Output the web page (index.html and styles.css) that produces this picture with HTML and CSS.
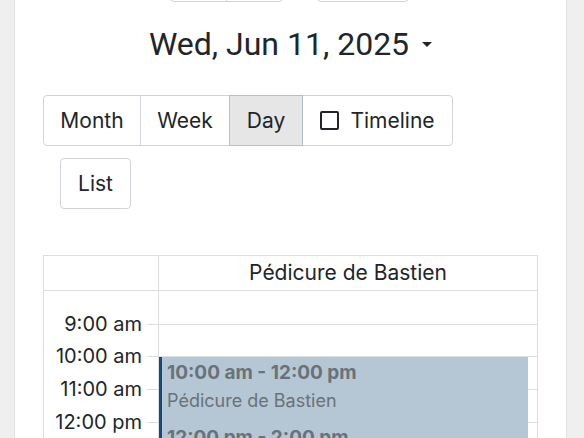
FILE: index.html
```html
<!DOCTYPE html>
<html>
<head>
<meta charset="utf-8">
<link rel="stylesheet" href="styles.css">
</head>
<body>
<div class="panel">
  <div class="nav-row">
    <div class="btn-group">
      <button class="btn nav-btn">&nbsp;</button>
      <button class="btn nav-btn">&nbsp;</button>
    </div>
    <button class="btn today-btn">&nbsp;</button>
  </div>
  <div class="title-row">
    <h2 class="title">Wed, Jun 11, 2025</h2>
    <span class="caret"></span>
  </div>
  <div class="views">
    <div class="btn-group">
      <button class="btn v-month">Month</button>
      <button class="btn v-week">Week</button>
      <button class="btn v-day active">Day</button>
      <button class="btn v-timeline"><span class="checkbox"></span>Timeline</button>
    </div>
    <button class="btn v-list">List</button>
  </div>
  <div class="grid">
    <div class="head-row">
      <div class="axis-head"></div>
      <div class="res-head">Pédicure de Bastien</div>
    </div>
    <div class="body">
      <div class="axis">
        <div class="slot-label"><span></span></div>
        <div class="slot-label"><span>9:00 am</span></div>
        <div class="slot-label"><span>10:00 am</span></div>
        <div class="slot-label"><span>11:00 am</span></div>
        <div class="slot-label"><span>12:00 pm</span></div>
      </div>
      <div class="col">
        <div class="slot"></div>
        <div class="slot"></div>
        <div class="slot"></div>
        <div class="slot"></div>
        <div class="slot"></div>
        <div class="events">
          <div class="event ev1">
            <div class="ev-time">10:00 am - 12:00 pm</div>
            <div class="ev-title">Pédicure de Bastien</div>
          </div>
          <div class="event ev2">
            <div class="ev-time">12:00 pm - 2:00 pm</div>
            <div class="ev-title">Pédicure de Bastien</div>
          </div>
        </div>
      </div>
    </div>
  </div>
</div>
</body>
</html>
```
FILE: styles.css
```css
html, body {
  margin: 0;
  height: 100%;
  overflow: hidden;
}
body {
  background: #efefef;
  font-family: Inter, "Noto Sans", sans-serif;
  color: #212529;
}
.panel {
  display: flow-root;
  margin-left: 14px;
  width: 553px;
  height: 100%;
  background: #fff;
  border-left: 1px solid #e2e2e2;
  border-right: 1px solid #e2e2e2;
  padding: 0 28px;
  box-sizing: border-box;
  overflow: hidden;
}
.btn {
  font-family: inherit;
  font-size: 21px;
  color: #212529;
  background: #fff;
  border: 1px solid #d0d4da;
  border-radius: 4px;
  height: 51px;
  padding: 0 17px;
  margin: 0;
  display: inline-flex;
  align-items: center;
}
.btn-group {
  display: inline-flex;
}
.btn-group .btn {
  border-radius: 0;
  margin-left: -1px;
}
.btn-group .btn:first-child {
  border-radius: 4px 0 0 4px;
  margin-left: 0;
}
.btn-group .btn:last-child {
  border-radius: 0 4px 4px 0;
}
.nav-row {
  display: flex;
  margin-top: -49px;
  padding-left: 127px;
  gap: 34px;
}
.nav-btn {
  width: 57px;
}
.today-btn {
  width: 92px;
}
.title-row {
  display: flex;
  justify-content: center;
  align-items: center;
  margin-top: 22px;
}
.title {
  margin: 0;
  font-family: Roboto, Inter, sans-serif;
  font-weight: 400;
  font-size: 32px;
  line-height: 40px;
}
.caret {
  margin-left: 13px;
  width: 0;
  height: 0;
  border-left: 5px solid transparent;
  border-right: 5px solid transparent;
  border-top: 5px solid #212529;
}
.views {
  margin-top: 31px;
}
.v-month { width: 98px; justify-content: center; padding: 0; }
.v-week { width: 90px; justify-content: center; padding: 0; }
.v-day { width: 74px; justify-content: center; padding: 0; }
.v-timeline { width: 151px; justify-content: center; padding: 0; }
.btn.active {
  background: #e6e6e6;
  border-color: #b8bec6;
  position: relative;
}
.checkbox {
  width: 15px;
  height: 15px;
  border: 2px solid #212529;
  border-radius: 2px;
  margin-right: 11px;
}
.v-list {
  display: flex;
  margin-top: 12px;
  margin-left: 17px;
  width: 71px;
  justify-content: center;
  padding: 0;
}
.grid {
  margin-top: 46px;
  width: 495px;
  box-sizing: border-box;
  border: 1px solid #dedede;
  border-bottom: none;
}
.head-row {
  display: flex;
  height: 34px;
  border-bottom: 1px solid #dedede;
}
.axis-head {
  width: 114px;
  border-right: 1px solid #dedede;
}
.res-head {
  flex: 1;
  text-align: center;
  font-size: 21px;
  line-height: 34px;
}
.body {
  display: flex;
}
.axis {
  width: 114px;
  border-right: 1px solid #dedede;
}
.slot-label {
  height: 32.7px;
  position: relative;
}
.slot-label span {
  position: absolute;
  right: 16px;
  top: -12px;
  font-size: 20px;
  line-height: 24px;
  white-space: nowrap;
}
.slot-label:not(:first-child)::after {
  content: "";
  position: absolute;
  right: 0;
  top: 0;
  width: 11px;
  border-top: 1px solid #dedede;
}
.col {
  flex: 1;
  position: relative;
}
.slot {
  height: 32.7px;
  box-sizing: border-box;
}
.slot + .slot {
  border-top: 1px solid #dedede;
}
.events {
  position: absolute;
  left: 0;
  right: 9px;
  top: 66px;
}
.event {
  background: #b5c7d5;
  border-left: 3px solid #174a7c;
  height: 65.4px;
  box-sizing: border-box;
  padding: 4px 0 0 5px;
  color: #6b7178;
}
.ev-time {
  font-weight: 700;
  font-size: 19px;
  line-height: 24px;
}
.ev-title {
  font-size: 18px;
  line-height: 24px;
  margin-top: 4px;
}
```
